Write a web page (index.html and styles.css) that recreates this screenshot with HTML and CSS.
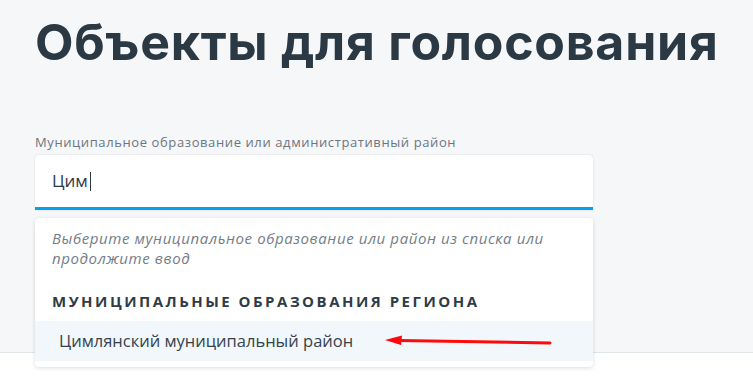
FILE: index.html
```html
<!DOCTYPE html>
<html lang="ru">
<head>
    <meta charset="UTF-8">
    <meta name="viewport" content="width=device-width, initial-scale=1.0">
    <title>Объекты для голосования</title>
    <link rel="stylesheet" href="styles.css">
</head>
<body>
    <main class="page">
        <h1 class="page-title">Объекты для голосования</h1>

        <div class="field">
            <label class="field-label">Муниципальное образование или административный район</label>
            <div class="field-input">Цим<span class="caret"></span></div>

            <div class="dropdown">
                <p class="dropdown-hint">Выберите муниципальное образование или район из списка или<br>продолжите ввод</p>
                <div class="dropdown-group">Муниципальные образования региона</div>
                <div class="dropdown-item">Цимлянский муниципальный район</div>

                <!-- red pointer drawn over the list -->
                <svg class="pointer" width="180" height="12" viewBox="0 0 180 12">
                    <line x1="14" y1="5.5" x2="165" y2="8" stroke="#ff0a0a" stroke-width="3" stroke-linecap="round"/>
                    <polygon points="0,5 17,0.5 16,10" fill="#ff0a0a"/>
                </svg>
            </div>
        </div>
    </main>
    <div class="below"></div>
</body>
</html>
```

FILE: styles.css
```css
body {
    margin: 0;
    font-family: 'Open Sans', 'Liberation Sans', sans-serif;
    background: #ffffff;
    color: #2c3a45;
}

.page {
    height: 353px;
    box-sizing: border-box;
    padding: 0 35px;
    background: #f6f7f9;
    border-bottom: 1px solid #dfe4e9;
}

.page-title {
    margin: 0;
    padding-top: 14px;
    font-family: 'Inter', sans-serif;
    font-size: 50px;
    font-weight: 700;
    line-height: 56px;
    letter-spacing: 0.75px;
    white-space: nowrap;
    color: #2b3944;
}

.field {
    position: relative;
    width: 558px;
    margin-top: 64px;
}

.field-label {
    display: block;
    font-size: 13px;
    line-height: 16px;
    letter-spacing: 0.6px;
    color: #6b7681;
    margin-bottom: 5px;
}

.field-input {
    height: 52px;
    box-sizing: content-box;
    background: #ffffff;
    border-radius: 4px 4px 0 0;
    border-bottom: 3px solid #079ff2;
    box-shadow: 0 0 2px rgba(0, 0, 0, 0.16);
    padding-left: 17px;
    font-size: 17px;
    line-height: 56px;
    color: #2c3a45;
    display: flex;
    align-items: center;
}

.caret {
    display: inline-block;
    width: 1px;
    height: 19px;
    margin-left: 2px;
    background: #2c3a45;
}

.dropdown {
    position: absolute;
    left: 0;
    right: 0;
    top: 84px;
    background: #ffffff;
    border-radius: 4px;
    box-shadow: 0 1px 4px rgba(0, 0, 0, 0.14);
    padding-bottom: 6px;
}

.dropdown-hint {
    margin: 0;
    padding: 10px 17px 0;
    font-size: 15px;
    font-style: italic;
    line-height: 20px;
    letter-spacing: 0.6px;
    color: #737d87;
}

.dropdown-group {
    padding: 24px 17px 0;
    font-size: 15px;
    font-weight: 700;
    line-height: 18px;
    letter-spacing: 2.5px;
    text-transform: uppercase;
    color: #2f3c47;
}

.dropdown-item {
    margin-top: 11px;
    height: 40px;
    padding-left: 24px;
    background: #f1f7fb;
    font-size: 16.5px;
    line-height: 40px;
    color: #36434d;
}

.pointer {
    position: absolute;
    left: 350px;
    top: 117px;
}

.below {
    height: 23px;
    background: #ffffff;
}
```
